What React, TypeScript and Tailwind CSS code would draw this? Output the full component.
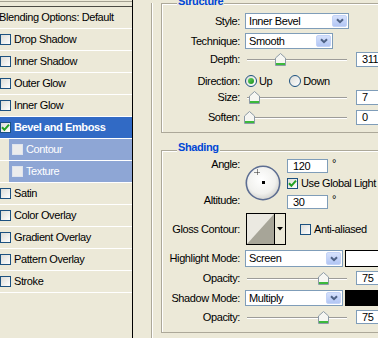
import type { ReactNode } from "react";

type StyleRow = {
  name: string;
  checked?: boolean;
  selected?: boolean;
  sub?: boolean;
};

const styleRows: StyleRow[] = [
  { name: "Drop Shadow" },
  { name: "Inner Shadow" },
  { name: "Outer Glow" },
  { name: "Inner Glow" },
  { name: "Bevel and Emboss", checked: true, selected: true },
  { name: "Contour", sub: true },
  { name: "Texture", sub: true },
  { name: "Satin" },
  { name: "Color Overlay" },
  { name: "Gradient Overlay" },
  { name: "Pattern Overlay" },
  { name: "Stroke" },
];

function CheckBox(props: { checked?: boolean; dim?: boolean }) {
  return (
    <span
      className={
        props.dim
          ? "flex h-[11px] w-[11px] shrink-0 items-center justify-center border border-[#dfe4ee] bg-[#ececec]"
          : "flex h-[11px] w-[11px] shrink-0 items-center justify-center border border-[#1c5180] bg-linear-to-br from-[#dcdcd7] to-white"
      }
    >
      {props.checked ? (
        <svg width="9" height="9" viewBox="0 0 9 9">
          <path d="M1 4.2 L3.4 6.8 L8 1.6" fill="none" stroke="#21a121" strokeWidth="2" />
        </svg>
      ) : null}
    </span>
  );
}

function Radio(props: { checked?: boolean }) {
  return (
    <span className="flex h-[12px] w-[12px] shrink-0 items-center justify-center rounded-full border border-[#1c5180] bg-linear-to-br from-[#dcdcd7] to-white">
      {props.checked ? (
        <span className="h-[6px] w-[6px] rounded-full bg-linear-to-br from-[#5fd35f] to-[#1b8f1b]" />
      ) : null}
    </span>
  );
}

function Select(props: { value: string; className: string }) {
  return (
    <div
      className={`flex items-center border border-[#7f9db9] bg-white pl-[3px] ${props.className}`}
    >
      <span className="flex-1">{props.value}</span>
      <span className="m-px flex h-[calc(100%-2px)] w-[15px] items-center justify-center rounded-[2px] border border-[#c3d3f7] bg-linear-to-b from-[#d6e1fc] to-[#b2c6f4]">
        <svg width="8" height="6" viewBox="0 0 8 6">
          <path d="M1 1.2 L4 4.2 L7 1.2" fill="none" stroke="#4d6185" strokeWidth="2" />
        </svg>
      </span>
    </div>
  );
}

function Field(props: { value: string; className: string }) {
  return (
    <div
      className={`flex items-center border border-[#7f9db9] bg-white pl-[5px] ${props.className}`}
    >
      {props.value}
    </div>
  );
}

function Thumb() {
  return (
    <svg width="11" height="13" viewBox="0 0 11 13">
      <path
        d="M0.5 5 L5.5 0.5 L10.5 5 V12.5 H0.5 Z"
        fill="#f6f6f2"
        stroke="#8c9aa6"
      />
      <path d="M1 11 H10" stroke="#3cb93c" strokeWidth="2" />
    </svg>
  );
}

function Slider(props: { pos: number }) {
  return (
    <div className="relative h-[16px] w-[105px] shrink-0">
      <div className="absolute top-[8px] right-[3px] left-[2px] h-[2px] border-[#9d9c99] border-t border-b-white border-b" />
      <div className="absolute top-[2px]" style={{ left: props.pos }}>
        <Thumb />
      </div>
    </div>
  );
}

function Row(props: { label: string; className: string; children: ReactNode }) {
  return (
    <div className={`flex items-center ${props.className}`}>
      <span className="w-[78px] shrink-0 text-right">{props.label}</span>
      <div className="ml-[5px] flex items-center">{props.children}</div>
    </div>
  );
}

function Group(props: {
  title: string;
  className: string;
  titleClass: string;
  children: ReactNode;
}) {
  return (
    <div
      className={`relative w-[240px] border border-[#aca899] shadow-[inset_1px_1px_0_#fff] ${props.className}`}
    >
      <span
        className={`absolute left-[15px] bg-[#ece9d8] px-px font-bold text-[#0046d5] ${props.titleClass}`}
      >
        {props.title}
      </span>
      {props.children}
    </div>
  );
}

function Dial() {
  return (
    <svg width="36" height="36" viewBox="0 0 36 36" className="shrink-0">
      <defs>
        <radialGradient id="dial" cx="0.45" cy="0.4" r="0.6">
          <stop offset="0" stopColor="#ffffff" />
          <stop offset="0.7" stopColor="#f1f1ee" />
          <stop offset="1" stopColor="#d4d4d0" />
        </radialGradient>
      </defs>
      <circle cx="18" cy="18" r="16.7" fill="url(#dial)" stroke="#5d6e92" strokeWidth="1.6" />
      <path d="M12.5 4.5 V10.5 M9.5 7.5 H15.5" stroke="#222" strokeWidth="1" strokeDasharray="1 1" />
      <rect x="17" y="16" width="3" height="3" fill="#000" />
    </svg>
  );
}

function GlossContour() {
  return (
    <div className="ml-px flex h-[32px] w-[40px] border border-black bg-[#ece9d8]">
      <svg width="27" height="30" viewBox="0 0 27 30" className="shrink-0">
        <rect width="27" height="30" fill="#ebe9e1" />
        <polygon points="0,30 27,0 27,30" fill="#a7a598" />
      </svg>
      <div className="flex flex-1 items-center justify-center border-black border-l">
        <svg width="6" height="4" viewBox="0 0 6 4">
          <polygon points="0,0 6,0 3,3.5" fill="#000" />
        </svg>
      </div>
    </div>
  );
}

export default function App() {
  return (
    <div className="flex h-[338px] w-[378px] overflow-hidden bg-[#ece9d8] font-['Liberation_Sans',Arial,sans-serif] text-[11px] text-black leading-[13px] tracking-[-0.4px]">
      {/* style list */}
      <div className="w-[133px] shrink-0 border-black border-r pt-px">
        <div className="h-px bg-[#a3a091]" />
        <div className="mt-[4px] h-px bg-[#4b4a44]" />
        <div className="flex h-[22px] items-center border-white border-b pl-0 whitespace-nowrap">
          <span className="-ml-[1px]">Blending Options: Default</span>
        </div>
        {styleRows.map((row) =>
          row.sub ? (
            <div key={row.name} className="flex h-[22px] border-white border-b">
              <div className="ml-[9px] flex flex-1 items-center bg-[#8ea6d5] pl-[3px] text-white">
                <CheckBox dim />
                <span className="ml-[3px]">{row.name}</span>
              </div>
            </div>
          ) : (
            <div
              key={row.name}
              className={
                row.selected
                  ? "flex h-[22px] items-center border-white border-b bg-[#316ac5] font-bold text-white"
                  : "flex h-[22px] items-center border-white border-b"
              }
            >
              <CheckBox checked={row.checked} />
              <span className="ml-[3px]">{row.name}</span>
            </div>
          ),
        )}
      </div>

      {/* settings */}
      <div className="pl-[18px]">
        <div className="h-full border-[#aca899] border-l pl-[9px] shadow-[inset_1px_0_0_#fff]">
          <Group title="Structure" className="mt-[3px] h-[130px]" titleClass="top-[-9px]">
            <Row label="Style:" className="mt-[9px] h-[16px]">
              <Select value="Inner Bevel" className="h-[16px] w-[104px]" />
            </Row>
            <Row label="Technique:" className="mt-[4px] h-[16px]">
              <Select value="Smooth" className="h-[16px] w-[88px]" />
            </Row>
            <Row label="Depth:" className="mt-[2px] h-[16px]">
              <Slider pos={30} />
              <Field value="311" className="ml-[6px] h-[15px] w-[34px]" />
            </Row>
            <Row label="Direction:" className="mt-[6px] h-[16px]">
              <Radio checked />
              <span className="ml-[2px]">Up</span>
              <span className="ml-[17px]">
                <Radio />
              </span>
              <span className="ml-[2px]">Down</span>
            </Row>
            <Row label="Size:" className="h-[16px]">
              <Slider pos={4} />
              <Field value="7" className="ml-[6px] h-[15px] w-[34px]" />
            </Row>
            <Row label="Soften:" className="mt-[4px] h-[16px]">
              <Slider pos={-1} />
              <Field value="0" className="ml-[6px] h-[15px] w-[34px]" />
            </Row>
          </Group>

          <Group title="Shading" className="mt-[17px] h-[183px]" titleClass="top-[-10px]">
            <div className="mt-[6px] flex h-[51px]">
              <div className="flex w-[78px] shrink-0 flex-col justify-between text-right">
                <span className="mt-px">Angle:</span>
                <span className="mb-px">Altitude:</span>
              </div>
              <div className="mt-[8px] ml-[5px]">
                <Dial />
              </div>
              <div className="ml-[6px] flex flex-col">
                <div className="mt-[2px] flex items-start">
                  <Field value="120" className="h-[14px] w-[41px]" />
                  <span className="-mt-[2px] ml-[4px]">°</span>
                </div>
                <div className="mt-[4px] flex h-[12px] items-center">
                  <CheckBox checked />
                  <span className="ml-[3px] whitespace-nowrap">Use Global Light</span>
                </div>
                <div className="mt-[6px] flex items-start">
                  <Field value="30" className="h-[14px] w-[41px]" />
                  <span className="-mt-[2px] ml-[4px]">°</span>
                </div>
              </div>
            </div>
            <Row label="Gloss Contour:" className="mt-[5px] h-[32px]">
              <GlossContour />
              <span className="ml-[14px]">
                <CheckBox />
              </span>
              <span className="ml-[3px] whitespace-nowrap">Anti-aliased</span>
            </Row>
            <Row label="Highlight Mode:" className="mt-[5px] h-[17px]">
              <Select value="Screen" className="h-[17px] w-[98px]" />
              <span className="ml-[2px] h-[17px] w-[40px] border border-black bg-white" />
            </Row>
            <Row label="Opacity:" className="mt-[3px] h-[16px]">
              <Slider pos={73} />
              <Field value="75" className="ml-[6px] h-[14px] w-[34px]" />
            </Row>
            <Row label="Shadow Mode:" className="mt-[4px] h-[16px]">
              <Select value="Multiply" className="h-[16px] w-[98px]" />
              <span className="ml-[2px] h-[16px] w-[40px] border border-black bg-black" />
            </Row>
            <Row label="Opacity:" className="mt-[3px] h-[16px]">
              <Slider pos={73} />
              <Field value="75" className="ml-[6px] h-[14px] w-[34px]" />
            </Row>
          </Group>
        </div>
      </div>
    </div>
  );
}
